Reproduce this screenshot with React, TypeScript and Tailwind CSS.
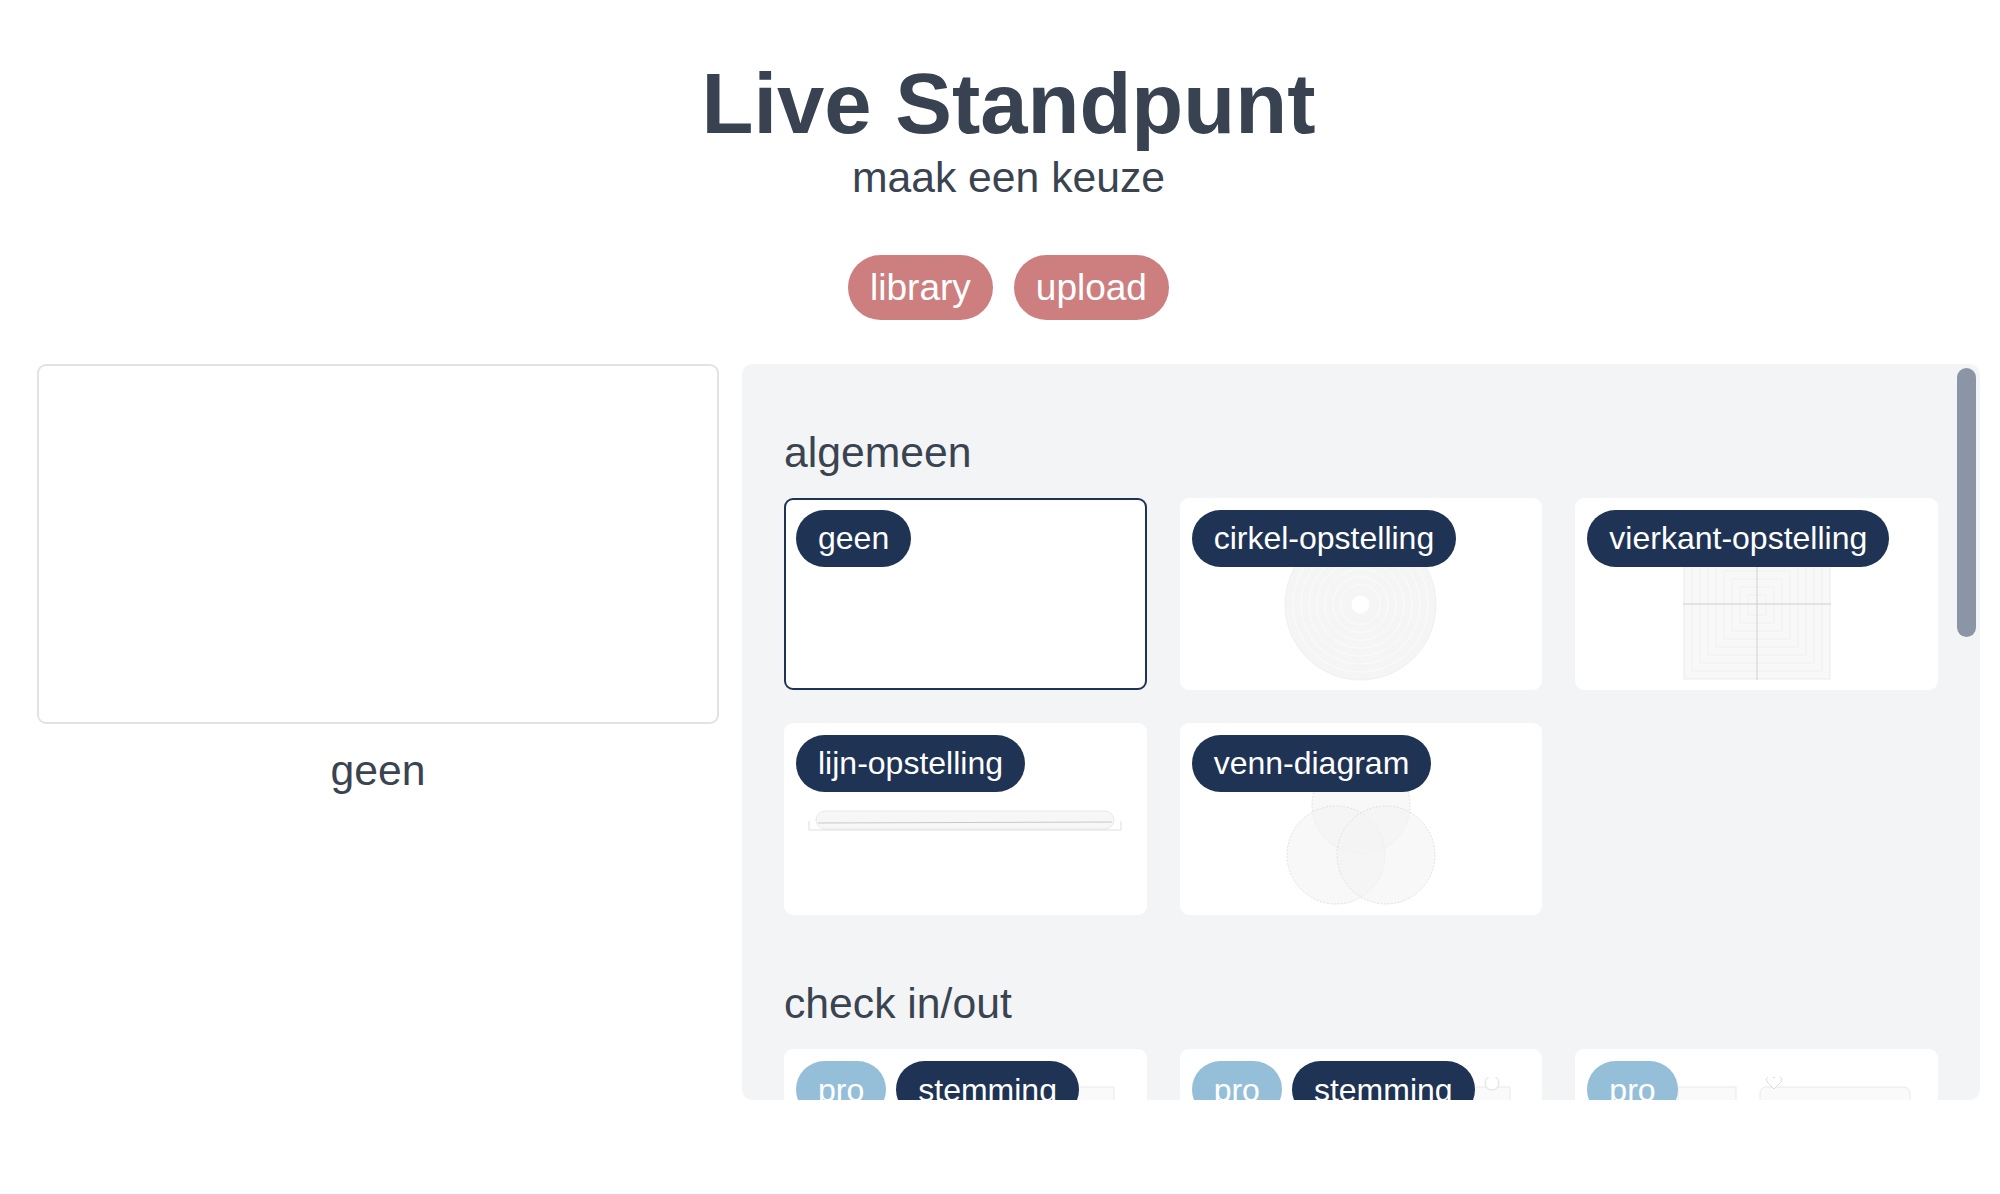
import React from 'react';

type Card = {
  name?: string;
  pro?: boolean;
  selected?: boolean;
  thumbTop?: boolean;
  thumb?: React.ReactNode;
};

function CircleThumb() {
  const rings = [68, 60, 52, 44, 36, 28, 20];
  return (
    <svg viewBox="0 0 154 154" className="h-[153px] w-[153px]">
      <circle cx="77" cy="77" r="76" fill="#f5f5f5" stroke="#ececec" strokeWidth="0.8" />
      {rings.map((r) => (
        <circle key={r} cx="77" cy="77" r={r} fill="none" stroke="#fbfbfb" strokeWidth="1" />
      ))}
      <circle cx="77" cy="77" r="9" fill="#ffffff" />
    </svg>
  );
}

function SquareThumb() {
  const steps = [8, 16, 24, 32, 40, 48, 56, 64];
  return (
    <svg viewBox="0 0 148 150" className="h-[150px] w-[148px]">
      <rect x="1" y="1" width="146" height="148" fill="#f8f8f8" stroke="#e6e6e6" strokeWidth="0.8" />
      {steps.map((s) => (
        <rect
          key={s}
          x={1 + s}
          y={1 + s}
          width={146 - 2 * s}
          height={148 - 2 * s}
          fill="none"
          stroke="#ececec"
          strokeWidth="0.6"
        />
      ))}
      <line x1="74" y1="0" x2="74" y2="150" stroke="#cfcfcf" strokeWidth="1" />
      <line x1="0" y1="74" x2="148" y2="74" stroke="#cfcfcf" strokeWidth="1" />
    </svg>
  );
}

function LineThumb() {
  return (
    <svg viewBox="0 0 314 30" className="h-[30px] w-[314px] -translate-y-[6px]">
      <rect x="8" y="2" width="298" height="18" rx="9" fill="#f7f7f7" stroke="#e4e4e4" strokeWidth="0.8" />
      <line x1="10" y1="14" x2="304" y2="13" stroke="#c9c9c9" strokeWidth="1" />
      <polyline points="1,12 1,21 313,21 313,12" fill="none" stroke="#d6d6d6" strokeWidth="0.8" />
    </svg>
  );
}

function VennThumb() {
  return (
    <svg viewBox="0 0 150 152" className="h-[152px] w-[150px]">
      <circle cx="75" cy="51" r="49" fill="#f3f3f3" fillOpacity="0.6" stroke="#d9d9d9" strokeWidth="0.8" strokeDasharray="2 1.5" />
      <circle cx="50" cy="101" r="49" fill="#f3f3f3" fillOpacity="0.6" stroke="#d9d9d9" strokeWidth="0.8" strokeDasharray="2 1.5" />
      <circle cx="100" cy="101" r="49" fill="#f3f3f3" fillOpacity="0.6" stroke="#d9d9d9" strokeWidth="0.8" strokeDasharray="2 1.5" />
    </svg>
  );
}

function FaintBars({ heart, face }: { heart?: boolean; face?: boolean }) {
  return (
    <svg viewBox="0 0 318 60" className="h-[60px] w-[318px]">
      {heart ? (
        <>
          <rect x="80" y="10" width="58" height="40" fill="#fafafa" stroke="#e4e4e4" strokeWidth="0.8" />
          <rect x="162" y="10" width="150" height="40" rx="6" fill="#fafafa" stroke="#e4e4e4" strokeWidth="0.8" />
          <path d="M176 12 l-7 -7 a4 4 0 0 1 7 -4 a4 4 0 0 1 7 4 z" fill="#ffffff" stroke="#d4d4d4" strokeWidth="0.8" />
        </>
      ) : (
        <rect x="262" y="10" width="46" height="40" fill="#fafafa" stroke="#e4e4e4" strokeWidth="0.8" />
      )}
      {face && (
        <>
          <circle cx="290" cy="6" r="7" fill="#ffffff" stroke="#d6d6d6" strokeWidth="0.8" />
          <circle cx="72" cy="6" r="7" fill="#ffffff" stroke="#d6d6d6" strokeWidth="0.8" />
        </>
      )}
    </svg>
  );
}

function Pill({ children, light }: { children: React.ReactNode; light?: boolean }) {
  return (
    <span
      className={
        light
          ? 'flex h-[57px] items-center rounded-full bg-[#95bfd8] px-[22px] text-[32px] leading-none text-white'
          : 'flex h-[57px] items-center rounded-full bg-[#1f3354] px-[22px] text-[32px] leading-none text-white'
      }
    >
      {children}
    </span>
  );
}

function ThumbCard({ card }: { card: Card }) {
  return (
    <div
      className={
        card.selected
          ? 'relative h-[192px] overflow-hidden rounded-[9px] border-2 border-[#1f3354] bg-white'
          : 'relative h-[192px] overflow-hidden rounded-[9px] border-2 border-white bg-white'
      }
    >
      <div
        className={
          card.thumbTop
            ? 'absolute top-[26px] right-[8px] bottom-[6px] left-[8px] flex items-start justify-center'
            : 'absolute top-[28px] right-[22px] bottom-[6px] left-[22px] flex items-center justify-center'
        }
      >
        {card.thumb}
      </div>
      <div className="relative flex gap-[10px] p-[10px]">
        {card.pro && <Pill light>pro</Pill>}
        {card.name && <Pill>{card.name}</Pill>}
      </div>
    </div>
  );
}

function Section({ title, cards }: { title: string; cards: Card[] }) {
  return (
    <section className="pt-[64px]">
      <h2 className="mb-[21px] text-[42.7px] leading-[1.15] text-[#3a4450]">{title}</h2>
      <div className="grid grid-cols-3 gap-[33px]">
        {cards.map((c, i) => (
          <ThumbCard key={i} card={c} />
        ))}
      </div>
    </section>
  );
}

export default function App() {
  const algemeen: Card[] = [
    { name: 'geen', selected: true },
    { name: 'cirkel-opstelling', thumb: <CircleThumb /> },
    { name: 'vierkant-opstelling', thumb: <SquareThumb /> },
    { name: 'lijn-opstelling', thumb: <LineThumb /> },
    { name: 'venn-diagram', thumb: <VennThumb /> },
  ];
  const checkInOut: Card[] = [
    { name: 'stemming', pro: true, thumbTop: true, thumb: <FaintBars /> },
    { name: 'stemming', pro: true, thumbTop: true, thumb: <FaintBars face /> },
    { pro: true, thumbTop: true, thumb: <FaintBars heart /> },
  ];

  return (
    <div className="min-h-screen bg-white font-['Liberation_Sans',Arial,sans-serif] text-[#3a4450]">
      <header className="flex flex-col items-center pt-[55px] pl-[17px]">
        <h1 className="text-[85px] leading-[1.15] font-bold text-[#384250]">Live Standpunt</h1>
        <p className="text-[42.7px] leading-[1.15]">maak een keuze</p>
        <div className="mt-[53px] flex gap-[21px]">
          <button className="h-[65px] rounded-full bg-[#cd7f80] px-[22px] text-[37px] leading-none text-white">
            library
          </button>
          <button className="h-[65px] rounded-full bg-[#cd7f80] px-[22px] text-[37px] leading-none text-white">
            upload
          </button>
        </div>
      </header>

      <main className="mt-[44px] flex gap-[23px] pl-[37px]">
        <div className="w-[682px] shrink-0">
          <div className="h-[360px] rounded-[9px] border-2 border-[#dfe3e8] bg-white" />
          <p className="mt-[22px] text-center text-[42.7px] leading-[1.15]">geen</p>
        </div>

        <div className="relative h-[736px] w-[1238px] shrink-0 overflow-hidden rounded-[10px] bg-[#f3f4f6]">
          <div className="px-[42px]">
            <Section title="algemeen" cards={algemeen} />
            <Section title="check in/out" cards={checkInOut} />
          </div>
          <div className="absolute top-[4px] right-[4px] h-[269px] w-[19px] rounded-full bg-[#8b95a5]" />
        </div>
      </main>
    </div>
  );
}
